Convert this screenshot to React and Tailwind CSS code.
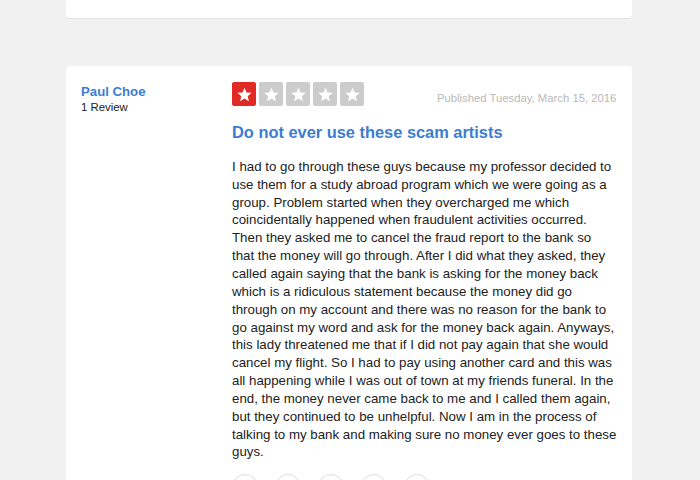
import React from 'react';

const lines = [
  'I had to go through these guys because my professor decided to',
  'use them for a study abroad program which we were going as a',
  'group. Problem started when they overcharged me which',
  'coincidentally happened when fraudulent activities occurred.',
  'Then they asked me to cancel the fraud report to the bank so',
  'that the money will go through. After I did what they asked, they',
  'called again saying that the bank is asking for the money back',
  'which is a ridiculous statement because the money did go',
  'through on my account and there was no reason for the bank to',
  'go against my word and ask for the money back again. Anyways,',
  'this lady threatened me that if I did not pay again that she would',
  'cancel my flight. So I had to pay using another card and this was',
  'all happening while I was out of town at my friends funeral. In the',
  'end, the money never came back to me and I called them again,',
  'but they continued to be unhelpful. Now I am in the process of',
  'talking to my bank and making sure no money ever goes to these',
  'guys.',
];

function Star({ on }) {
  return (
    <div
      className={
        'w-6 h-6 rounded-[2px] flex items-center justify-center ' +
        (on ? 'bg-[#e12a24]' : 'bg-[#cccccc]')
      }
    >
      <svg viewBox="0 0 24 24" className="w-[17px] h-[17px]" fill="#fff">
        <path d="M12 2.5l2.85 6.6 7.15.6-5.45 4.7 1.65 7-6.2-3.75-6.2 3.75 1.65-7L2 9.7l7.15-.6z" />
      </svg>
    </div>
  );
}

export default function App() {
  return (
    <div
      className="bg-[#f1f1f1] overflow-hidden h-[480px]"
      style={{ fontFamily: '"Liberation Sans", Arial, sans-serif' }}
    >
      <div className="mx-[66px] -mt-[40px] flex flex-col gap-12 w-[566px]">
        {/* previous review card, cut off */}
        <div className="h-[58px] bg-white rounded-[4px] shadow-[0_1px_1px_rgba(0,0,0,0.06)]" />

        {/* review card */}
        <div className="bg-white rounded-[4px] shadow-[0_1px_1px_rgba(0,0,0,0.06)] flex px-[15px] pt-4 pb-6">
          <div className="w-[151px] shrink-0 pt-[1px]">
            <div className="text-[13.2px] font-bold text-[#3c7dd1] leading-[17px]">Paul Choe</div>
            <div className="text-[11.4px] text-[#222] leading-[14px]">1 Review</div>
          </div>

          <div className="flex-1 pr-[1px]">
            <div className="flex items-center justify-between">
              <div className="flex gap-[3px]">
                <Star on />
                <Star />
                <Star />
                <Star />
                <Star />
              </div>
              <div className="text-[11.3px] text-[#b9b9b9] pt-[8px]">Published Tuesday, March 15, 2016</div>
            </div>

            <h2 className="mt-[15px] text-[16.4px] font-bold text-[#3c7dd1] leading-[20px]">
              Do not ever use these scam artists
            </h2>

            <div className="mt-[16px] text-[13.3px] leading-[17.85px] text-[#222]">
              {lines.map((l, i) => (
                <div key={i} className="whitespace-nowrap">{l}</div>
              ))}
            </div>

            <div className="mt-[13px] flex gap-[17px]">
              {[0, 1, 2, 3, 4].map((i) => (
                <div key={i} className="w-[26px] h-[26px] rounded-full border border-[#dddddd]" />
              ))}
            </div>
          </div>
        </div>
      </div>
    </div>
  );
}
